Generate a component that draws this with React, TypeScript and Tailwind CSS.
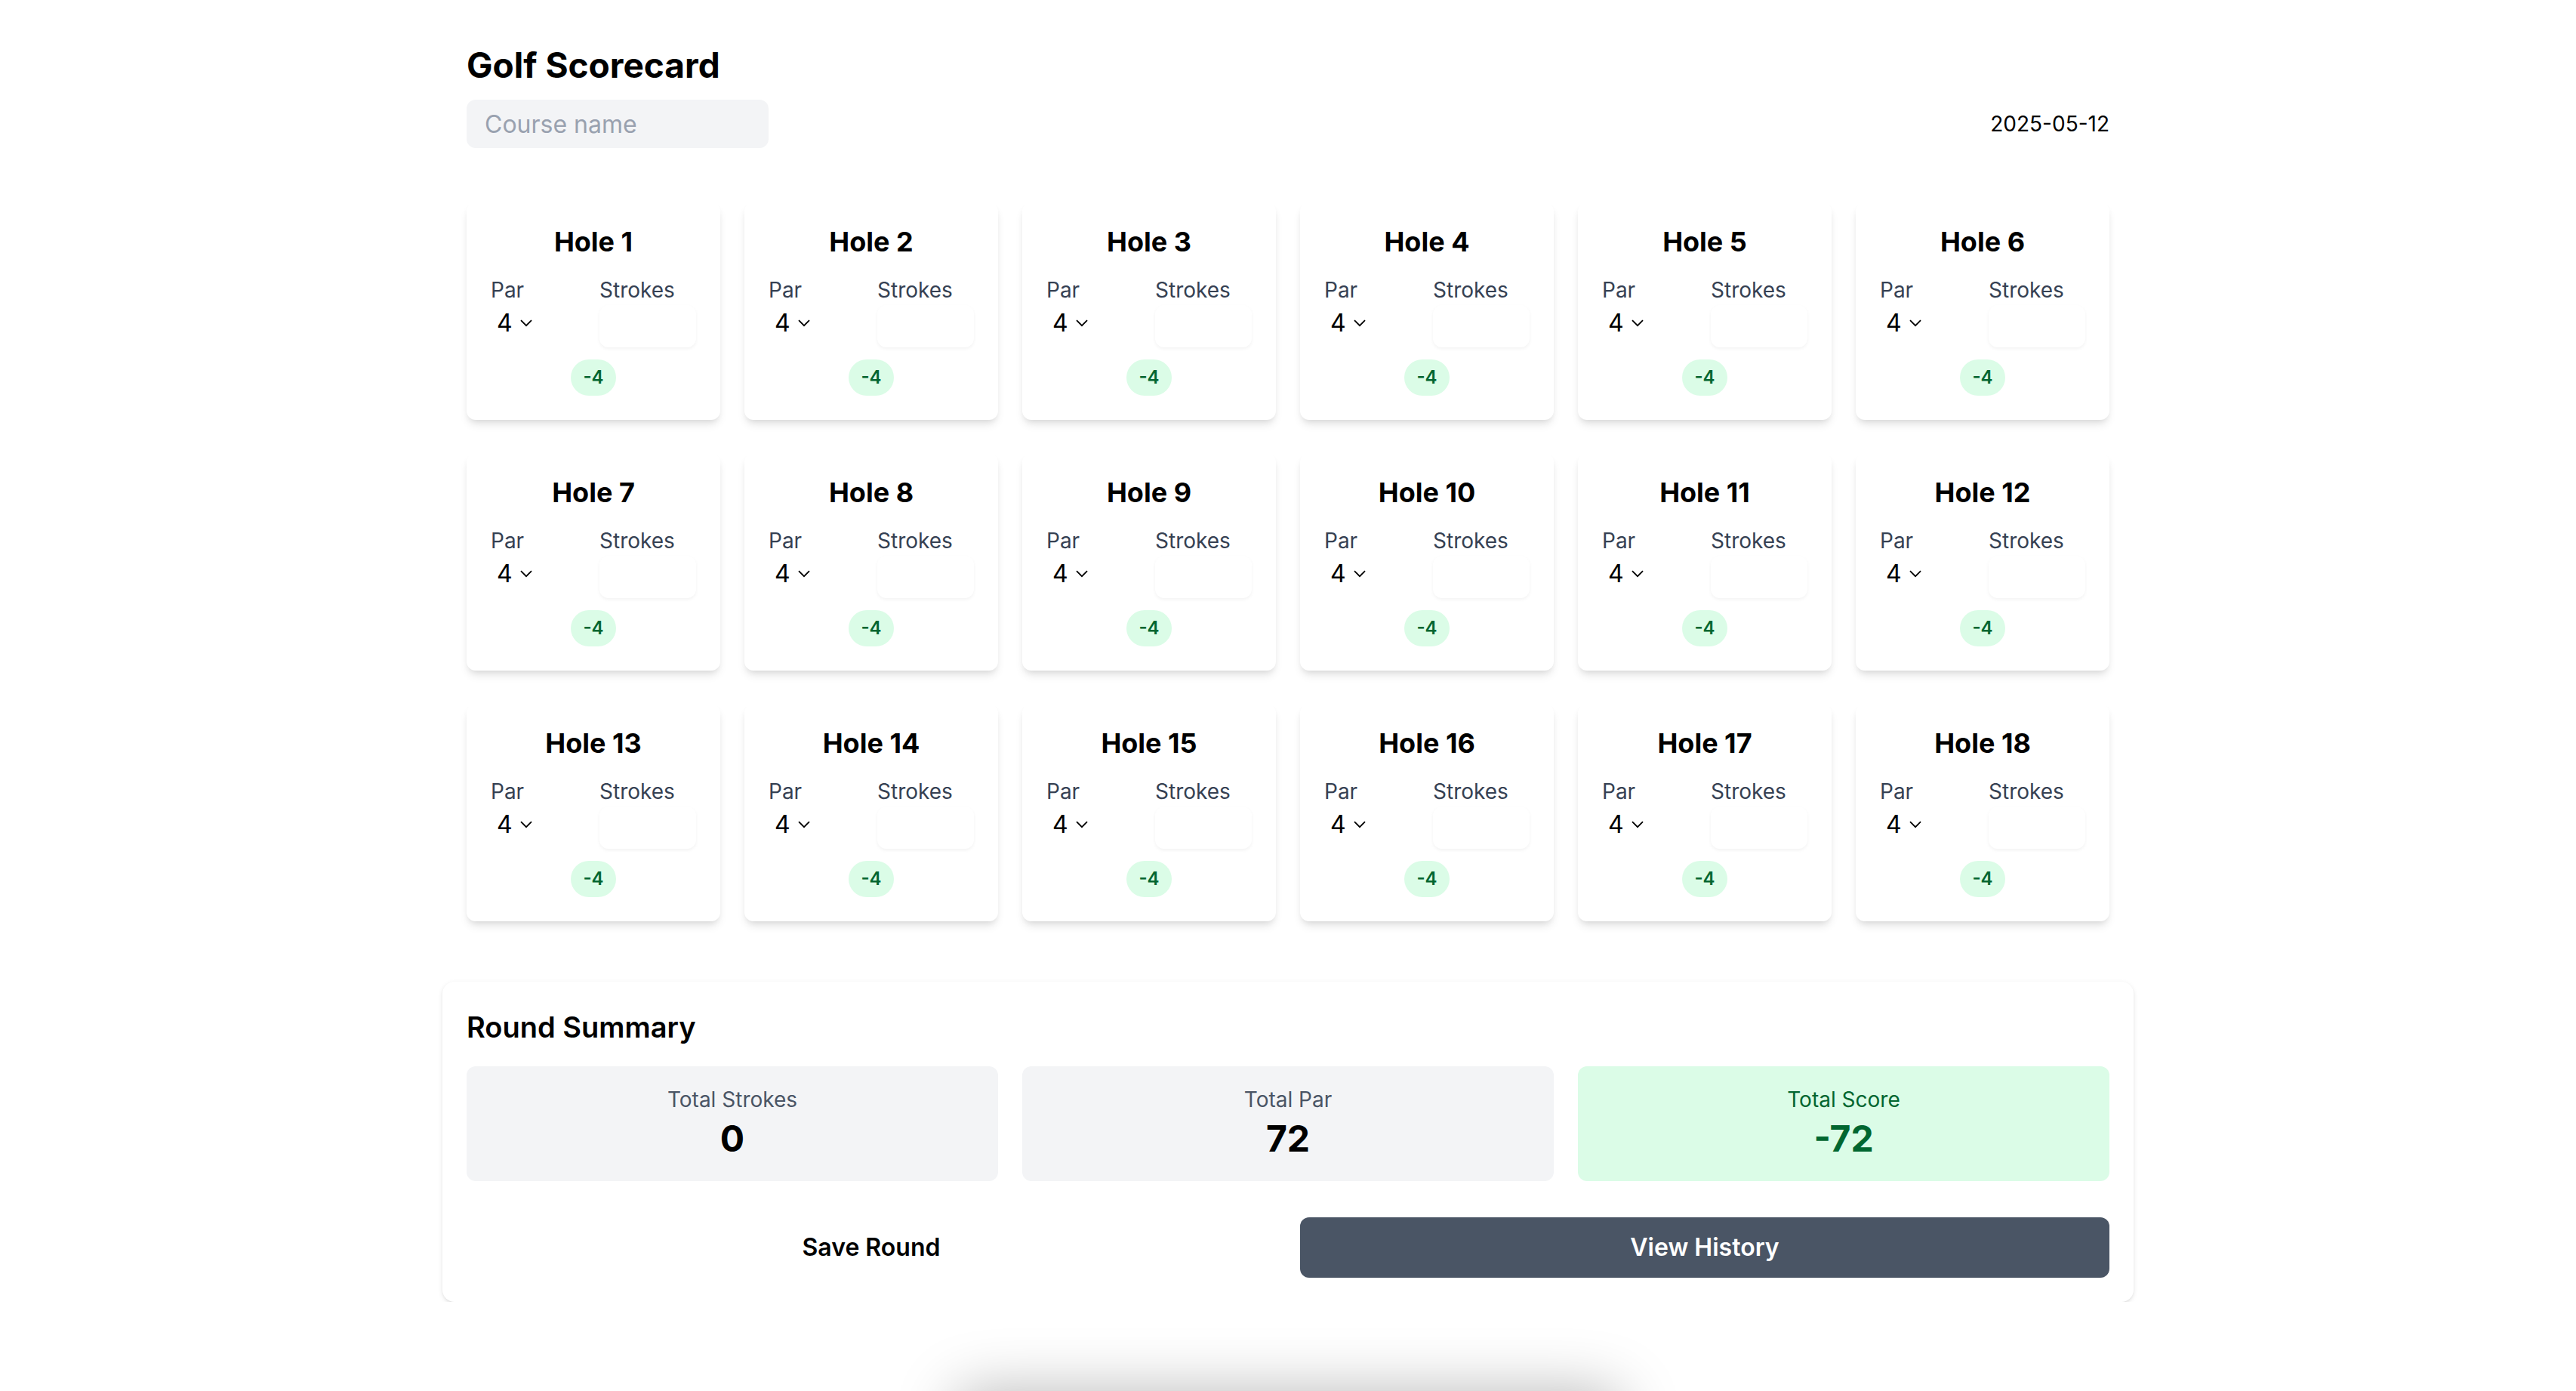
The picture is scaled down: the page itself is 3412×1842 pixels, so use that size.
import { useState } from 'react';

const HOLES = Array.from({ length: 18 }, (_, i) => i + 1);

function Chevron() {
  return (
    <svg width="8" height="5" viewBox="0 0 8 5" className="ml-[5px] text-black" fill="none">
      <path d="M0.5 0.6L4 4.1L7.5 0.6" stroke="currentColor" strokeWidth="0.9" />
    </svg>
  );
}

function HoleCard({
  hole,
  par,
  strokes,
  onPar,
  onStrokes,
}: {
  hole: number;
  par: number;
  strokes: string;
  onPar: (v: number) => void;
  onStrokes: (v: string) => void;
}) {
  const diff = (Number(strokes) || 0) - par;
  const label = diff > 0 ? `+${diff}` : `${diff}`;

  return (
    <div className="flex flex-col items-center rounded-md bg-white px-4 pt-3 pb-4 shadow-md">
      <h3 className="mb-2 text-lg font-bold text-black">Hole {hole}</h3>
      <div className="grid w-full grid-cols-2 gap-x-2">
        <div>
          <p className="text-sm text-gray-700">Par</p>
          <div className="flex h-6 items-center pl-1">
            <select
              value={par}
              onChange={(e) => onPar(Number(e.target.value))}
              className="appearance-none bg-transparent text-base text-black outline-none"
            >
              <option value={3}>3</option>
              <option value={4}>4</option>
              <option value={5}>5</option>
            </select>
            <Chevron />
          </div>
        </div>
        <div>
          <p className="text-sm text-gray-700">Strokes</p>
          <input
            type="text"
            inputMode="numeric"
            value={strokes}
            onChange={(e) => onStrokes(e.target.value)}
            className="h-7 w-full rounded-md bg-white px-2 text-sm shadow-xs outline-none"
          />
        </div>
      </div>
      <span className="mt-2 rounded-full bg-green-100 px-2 py-1 text-xs font-semibold text-green-800">{label}</span>
    </div>
  );
}

export default function App() {
  const [pars, setPars] = useState<number[]>(HOLES.map(() => 4));
  const [strokes, setStrokes] = useState<string[]>(HOLES.map(() => ''));

  const totalStrokes = strokes.reduce((sum, s) => sum + (Number(s) || 0), 0);
  const totalPar = pars.reduce((sum, p) => sum + p, 0);
  const score = totalStrokes - totalPar;

  return (
    <div className="bg-white font-['Inter',sans-serif] text-black">
      <div className="[zoom:2]">
        <div className="mx-auto max-w-6xl px-8 pt-[27px]">
          <h1 className="text-[23px] leading-8 font-bold">Golf Scorecard</h1>
          <div className="mt-[7px] flex items-center justify-between">
            <input
              placeholder="Course name"
              className="h-8 w-[200px] rounded-md bg-gray-100 px-3 text-base outline-none placeholder:text-gray-400"
            />
            <span className="text-sm">2025-05-12</span>
          </div>

          <div className="mt-9 grid grid-cols-6 gap-x-4 gap-y-[22px]">
            {HOLES.map((hole, i) => (
              <HoleCard
                key={hole}
                hole={hole}
                par={pars[i]}
                strokes={strokes[i]}
                onPar={(v) => setPars((prev) => prev.map((p, j) => (j === i ? v : p)))}
                onStrokes={(v) => setStrokes((prev) => prev.map((s, j) => (j === i ? v : s)))}
              />
            ))}
          </div>

          <div className="-mx-4 mt-10 rounded-lg bg-white p-4 shadow-sm">
            <h2 className="mb-3 text-[19px] leading-7 font-semibold">Round Summary</h2>
            <div className="grid grid-cols-3 gap-4">
              <div className="rounded-md bg-gray-100 p-3 text-center">
                <p className="text-sm text-gray-600">Total Strokes</p>
                <p className="text-2xl font-bold">{totalStrokes}</p>
              </div>
              <div className="rounded-md bg-gray-100 p-3 text-center">
                <p className="text-sm text-gray-600">Total Par</p>
                <p className="text-2xl font-bold">{totalPar}</p>
              </div>
              <div className="rounded-md bg-green-100 p-3 text-center text-green-800">
                <p className="text-sm">Total Score</p>
                <p className="text-2xl font-bold">{score > 0 ? `+${score}` : score}</p>
              </div>
            </div>
            <div className="mt-6 grid grid-cols-2 gap-4">
              <button className="rounded-md py-2 text-base font-semibold text-black">Save Round</button>
              <button className="rounded-md bg-gray-600 py-2 text-base font-semibold text-white">View History</button>
            </div>
          </div>
        </div>
      </div>
      <div className="fixed bottom-0 left-1/2 h-[200px] w-[880px] -translate-x-1/2 translate-y-full rounded-3xl bg-white shadow-[0_0_80px_rgba(0,0,0,0.28)]" />
    </div>
  );
}
